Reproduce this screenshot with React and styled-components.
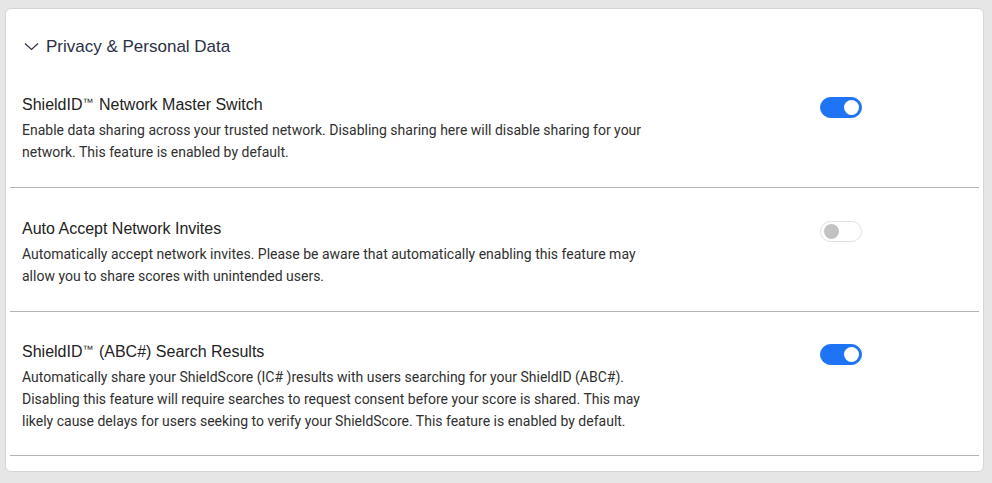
import React, { useState } from "react";
import styled, { createGlobalStyle } from "styled-components";

const GlobalStyle = createGlobalStyle`
  html, body {
    margin: 0;
    padding: 0;
    background: #e6e6e6;
  }
  body {
    font-family: Roboto, "Liberation Sans", sans-serif;
  }
`;

const Page = styled.div`
  padding: 8px 8px 11px 5px;
  box-sizing: border-box;
  height: 483px;
`;

const Card = styled.div`
  background: #ffffff;
  border: 1px solid #d6d6d6;
  border-radius: 6px;
  padding: 0 4px 15px 4px;
  height: 100%;
  box-sizing: border-box;
`;

const Header = styled.div`
  display: flex;
  align-items: center;
  gap: 7px;
  height: 74px;
  padding-left: 14px;
  padding-top: 1px;
  box-sizing: border-box;
  font-family: "Liberation Sans", Arial, sans-serif;
  font-size: 17px;
  color: #2b3045;
`;

const Row = styled.div`
  display: flex;
  justify-content: space-between;
  align-items: flex-start;
  padding: ${(p) => p.$top}px 0 ${(p) => p.$bottom}px 12px;
  border-bottom: 1px solid #b3b3b3;
`;

const Text = styled.div`
  width: 625px;
`;

const Title = styled.div`
  font-family: "Liberation Sans", Arial, sans-serif;
  font-size: 16px;
  line-height: 20px;
  color: #222222;
`;

const Tm = styled.span`
  font-size: 11px;
  line-height: 0;
  vertical-align: 4px;
  margin-right: 1px;
`;

const Desc = styled.div`
  margin-top: 4px;
  font-size: 14px;
  line-height: 22px;
  color: #303030;
`;

const Toggle = styled.button`
  position: relative;
  width: 42px;
  height: 21px;
  border-radius: 11px;
  margin: 2px 117px 0 0;
  padding: 0;
  flex-shrink: 0;
  cursor: pointer;
  box-sizing: border-box;
  background: ${(p) => (p.$on ? "#1f73f5" : "#ffffff")};
  border: 1px solid ${(p) => (p.$on ? "#1f73f5" : "#dde1e6")};

  &::after {
    content: "";
    position: absolute;
    top: 2px;
    left: ${(p) => (p.$on ? "23px" : "3px")};
    width: 15px;
    height: 15px;
    border-radius: 50%;
    background: ${(p) => (p.$on ? "#ffffff" : "#c2c2c2")};
  }
`;

const Chevron = () => (
  <svg width="15" height="9" viewBox="0 0 15 9" fill="none">
    <path d="M1 1.5 L7.5 7.5 L14 1.5" stroke="#2b3045" strokeWidth="1.2" />
  </svg>
);

const settings = [
  {
    title: (
      <>
        ShieldID<Tm>™</Tm> Network Master Switch
      </>
    ),
    desc: "Enable data sharing across your trusted network. Disabling sharing here will disable sharing for your network. This feature is enabled by default.",
    on: true,
    top: 12,
    bottom: 24,
  },
  {
    title: "Auto Accept Network Invites",
    desc: "Automatically accept network invites. Please be aware that automatically enabling this feature may allow you to share scores with unintended users.",
    on: false,
    top: 31,
    bottom: 24,
  },
  {
    title: (
      <>
        ShieldID<Tm>™</Tm> (ABC#) Search Results
      </>
    ),
    desc: "Automatically share your ShieldScore (IC# )results with users searching for your ShieldID (ABC#). Disabling this feature will require searches to request consent before your score is shared. This may likely cause delays for users seeking to verify your ShieldScore. This feature is enabled by default.",
    on: true,
    top: 30,
    bottom: 23,
  },
];

export default function App() {
  const [values, setValues] = useState(settings.map((s) => s.on));

  const flip = (i) => {
    setValues(values.map((v, j) => (j === i ? !v : v)));
  };

  return (
    <Page>
      <GlobalStyle />
      <Card>
        <Header>
          <Chevron />
          Privacy &amp; Personal Data
        </Header>
        {settings.map((s, i) => (
          <Row key={i} $top={s.top} $bottom={s.bottom}>
            <Text>
              <Title>{s.title}</Title>
              <Desc>{s.desc}</Desc>
            </Text>
            <Toggle $on={values[i]} onClick={() => flip(i)} />
          </Row>
        ))}
      </Card>
    </Page>
  );
}
